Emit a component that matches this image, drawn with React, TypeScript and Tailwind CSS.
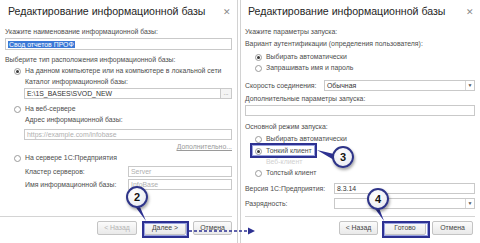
import React from 'react';

type Kids = { children?: React.ReactNode; cls?: string };

function Lbl({ children, cls = '' }: Kids) {
  return (
    <div className={`h-[10px] leading-[10px] text-[6.9px] text-[#4d4d4d] whitespace-nowrap ${cls}`}>{children}</div>
  );
}

function Radio({ label, checked, faint, cls = '', indent = 'ml-[9px]' }: { label: string; checked?: boolean; faint?: boolean; cls?: string; indent?: string }) {
  return (
    <div className={`flex items-center h-[10px] gap-[4px] ${indent} ${cls}`}>
      <span className={`w-[7px] h-[7px] rounded-full border flex items-center justify-center ${faint ? 'border-transparent' : 'border-[#9a9a9a] bg-white'}`}>
        {checked && <span className="w-[3px] h-[3px] rounded-full bg-[#3a3a3a]" />}
      </span>
      <span className={`text-[6.9px] leading-[10px] whitespace-nowrap ${faint ? 'text-[#d0d0d0]' : 'text-[#4d4d4d]'}`}>{label}</span>
    </div>
  );
}

function Field({ children, cls = '', muted }: Kids & { muted?: boolean }) {
  return (
    <div className={`h-[11px] border border-[#c9c9c9] bg-white px-[2px] text-[6.9px] leading-[9px] whitespace-nowrap overflow-hidden ${muted ? 'text-[#b0b0b0]' : 'text-[#333]'} ${cls}`}>
      {children}
    </div>
  );
}

function Select({ children, cls = '' }: Kids) {
  return (
    <div className={`h-[11px] border border-[#c9c9c9] bg-white flex ${cls}`}>
      <div className="flex-1 px-[2px] text-[6.9px] leading-[9px] text-[#333]">{children}</div>
      <div className="w-[9px] border-l border-[#d6d6d6] flex items-center justify-center text-[5px] text-[#555]">▼</div>
    </div>
  );
}

function Btn({ children, disabled, w }: { children: React.ReactNode; disabled?: boolean; w: string }) {
  return (
    <div className={`h-[14px] ${w} rounded-[2px] border border-[#c4c4c4] bg-gradient-to-b from-[#fbfbfb] to-[#e9e9e9] flex items-center justify-center text-[6.9px] ${disabled ? 'text-[#b4b4b4]' : 'text-[#444]'}`}>
      {children}
    </div>
  );
}

function Title() {
  return (
    <div className="h-[24px] flex items-center justify-between">
      <span className="pl-[3px] text-[10.6px] text-[#262626]">Редактирование информационной базы</span>
      <span className="text-[8.5px] text-[#8a8a8a] pr-[1px]">✕</span>
    </div>
  );
}

function Bubble({ n, cls }: { n: string; cls: string }) {
  return (
    <div className={`absolute w-[22px] h-[22px] rounded-full border-2 border-[#2e3488] bg-[radial-gradient(circle_at_40%_35%,#ffffff,#e4e6ee)] shadow-[1px_2px_3px_rgba(0,0,0,0.35)] flex items-center justify-center text-[11px] font-bold text-[#111] ${cls}`}>
      {n}
    </div>
  );
}

export default function App() {
  return (
    <div className="relative w-[480px] h-[243px] overflow-hidden bg-white flex font-['Liberation_Sans',Arial,sans-serif]">
      {/* left dialog */}
      <div className="w-[238px] shrink-0 border-r border-[#d2d2d2] flex flex-col pl-[5px] pr-[5px]">
        <Title />
        <Lbl cls="mt-[3px]">Укажите наименование информационной базы:</Lbl>
        <Field cls="mt-[1px] !h-[12px] pt-[1px]">
          <span className="bg-[#3a78d6] text-white px-[1px]">Свод отчетов ПРОФ</span>
        </Field>
        <Lbl cls="mt-[5px]">Выберите тип расположения информационной базы:</Lbl>
        <Radio cls="mt-[1px]" checked label="На данном компьютере или на компьютере в локальной сети" />
        <Lbl cls="mt-[1px] ml-[20px]">Каталог информационной базы:</Lbl>
        <div className="mt-[1px] ml-[19px] flex">
          <Field cls="flex-1">E:\1S_BASES\SVOD_NEW</Field>
          <div className="w-[11px] h-[11px] border border-l-0 border-[#c9c9c9] bg-[#f4f4f4] text-[6px] leading-[9px] text-center text-[#777]">...</div>
        </div>
        <Radio cls="mt-[5px]" label="На веб-сервере" />
        <Lbl cls="mt-[1px] ml-[20px]">Адрес информационной базы:</Lbl>
        <Field muted cls="mt-[4px] ml-[19px]">https://example.com/infobase</Field>
        <div className="mt-[2px] h-[10px] flex justify-end">
          <span className="text-[6.9px] leading-[10px] text-[#9a9a9a] underline">Дополнительно...</span>
        </div>
        <Radio cls="mt-[1px]" label="На сервере 1С:Предприятия" />
        <div className="mt-[3px] flex items-center ml-[20px]">
          <Lbl cls="flex-1">Кластер серверов:</Lbl>
          <Field muted cls="w-[104px]">Server</Field>
        </div>
        <div className="mt-[2px] flex items-center ml-[20px]">
          <Lbl cls="flex-1">Имя информационной базы:</Lbl>
          <Field muted cls="w-[104px]">InfoBase</Field>
        </div>
        <div className="mt-[26px] h-px bg-[#d4d4d4] -ml-[5px]" />
        <div className="mt-[4px] flex justify-end gap-[7px]">
          <Btn disabled w="w-[40px]">&lt; Назад</Btn>
          <Btn w="w-[42px]">Далее &gt;</Btn>
          <Btn w="w-[39px]">Отмена</Btn>
        </div>
      </div>

      {/* right dialog */}
      <div className="ml-[2px] flex-1 border-l border-[#d2d2d2] flex flex-col pl-[4px] pr-[5px]">
        <Title />
        <Lbl cls="mt-[3px]">Укажите параметры запуска:</Lbl>
        <Lbl cls="mt-[2px]">Вариант аутентификации (определения пользователя):</Lbl>
        <Radio indent="ml-[10px]" cls="mt-[3px]" checked label="Выбирать автоматически" />
        <Radio indent="ml-[10px]" cls="mt-[1px]" label="Запрашивать имя и пароль" />
        <div className="mt-[7px] flex items-center">
          <Lbl cls="flex-1">Скорость соединения:</Lbl>
          <Select cls="w-[151px]">Обычная</Select>
        </div>
        <Lbl cls="mt-[3px]">Дополнительные параметры запуска:</Lbl>
        <Field cls="mt-[1px]">{''}</Field>
        <Lbl cls="mt-[6px]">Основной режим запуска:</Lbl>
        <Radio indent="ml-[10px]" cls="mt-[2px]" label="Выбирать автоматически" />
        <Radio indent="ml-[10px]" cls="mt-[2px]" checked label="Тонкий клиент" />
        <Radio indent="ml-[10px]" cls="mt-[1px]" faint label="Веб-клиент" />
        <Radio indent="ml-[10px]" cls="mt-[1px]" label="Толстый клиент" />
        <div className="mt-[5px] flex items-center">
          <Lbl cls="flex-1">Версия 1С:Предприятия:</Lbl>
          <Field cls="w-[141px]">8.3.14</Field>
        </div>
        <div className="mt-[4px] flex items-center">
          <Lbl cls="flex-1">Разрядность:</Lbl>
          <Select cls="w-[141px]">{''}</Select>
        </div>
        <div className="mt-[7px] h-px bg-[#d4d4d4]" />
        <div className="mt-[4px] flex justify-end gap-[6px] pr-[2px]">
          <Btn w="w-[39px]">&lt; Назад</Btn>
          <Btn w="w-[42px]">Готово</Btn>
          <Btn w="w-[41px]">Отмена</Btn>
        </div>
      </div>

      {/* callout frames */}
      <div className="absolute left-[142px] top-[221px] w-[47px] h-[17px] border-2 border-[#2d3192] shadow-[inset_0_0_0_1px_#9aa3e0]" />
      <div className="absolute left-[250px] top-[143px] w-[67px] h-[15px] border-2 border-[#2d3192] shadow-[inset_0_0_0_1px_#9aa3e0]" />
      <div className="absolute left-[382px] top-[221px] w-[48px] h-[17px] border-2 border-[#2d3192] shadow-[inset_0_0_0_1px_#9aa3e0]" />

      <svg className="absolute left-0 top-0" width="480" height="243" viewBox="0 0 480 243">
        <line x1="189" y1="231" x2="249" y2="231" stroke="#2d3192" strokeWidth="1.6" strokeDasharray="3 2" />
        <polygon points="248,227.5 255,231 248,234.5" fill="#2d3192" />
        <polygon points="134,205 140,207 146,221" fill="#2d3192" />
        <polygon points="317,150 334,154 334,160" fill="#2d3192" />
        <polygon points="373,206 379,208 384,221" fill="#2d3192" />
      </svg>

      <Bubble n="2" cls="left-[126px] top-[186px]" />
      <Bubble n="3" cls="left-[332px] top-[146px]" />
      <Bubble n="4" cls="left-[367px] top-[188px]" />
    </div>
  );
}
